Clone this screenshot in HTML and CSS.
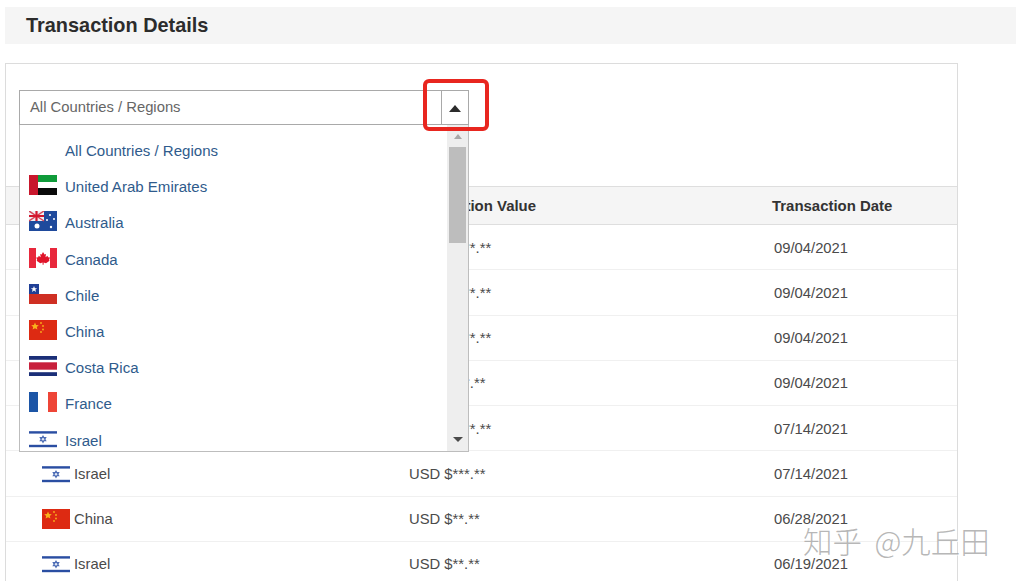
FILE: index.html
```html
<!DOCTYPE html>
<html lang="en">
<head>
<meta charset="utf-8">
<title>Transaction Details</title>
<link rel="stylesheet" href="styles.css">
</head>
<body>
<svg class="defs" width="0" height="0" aria-hidden="true">
  <symbol id="f-ae" viewBox="0 0 28 20">
    <rect width="28" height="7" fill="#0f9b3a"/><rect y="7" width="28" height="6" fill="#fff"/><rect y="13" width="28" height="7" fill="#0a0a0a"/><rect width="9" height="20" fill="#c8172c"/>
  </symbol>
  <symbol id="f-au" viewBox="0 0 28 20">
    <rect width="28" height="20" fill="#1f4a9c"/><rect width="15" height="10" fill="#eef0f5"/>
    <path d="M0 0l15 10M15 0L0 10" stroke="#d8485a" stroke-width="1.500"/><path d="M7.500 0v10M0 5h15" stroke="#d3172e" stroke-width="2.200"/>
    <circle cx="8" cy="15" r="2.500" fill="#fff"/><circle cx="21" cy="4" r="1" fill="#fff"/><circle cx="25" cy="8" r="1" fill="#fff"/><circle cx="18" cy="9" r="1" fill="#fff"/><circle cx="22" cy="16" r="1.200" fill="#fff"/>
  </symbol>
  <symbol id="f-ca" viewBox="0 0 28 20">
    <rect width="28" height="20" fill="#fff"/><rect width="7" height="20" fill="#e8283c"/><rect x="21" width="7" height="20" fill="#e8283c"/>
    <path d="M14 4l1.500 2.600 1.500-.6-.5 3.200 2-1.400.5 1.500 2 .2-1 2.500.6.800-3.600 2.400-2.400-.6V16.800h-1V14.600l-2.400.6L7.600 12.800l.6-.8-1-2.500 2-.2.500-1.500 2 1.400L11.200 6l1.500.6z" fill="#e0142a"/>
  </symbol>
  <symbol id="f-cl" viewBox="0 0 28 20">
    <rect width="28" height="20" fill="#fff"/><rect y="10" width="28" height="10" fill="#cf2f23"/><rect width="10" height="10" fill="#1f3f96"/>
    <path d="M5 2l.9 2.200H8.200L6.400 5.600l.6 2.300L5 6.600 3 7.900l.6-2.300L1.800 4.200h2.300z" fill="#fff"/>
  </symbol>
  <symbol id="f-cn" viewBox="0 0 28 20">
    <rect width="28" height="20" fill="#dd2a12"/>
    <path d="M6 2.500l1.100 2.500 2.700.2-2 1.800.6 2.600L6 8.200 3.600 9.600l.6-2.600-2-1.800 2.700-.2z" fill="#f9b21c"/>
    <circle cx="12" cy="3" r=".9" fill="#f9b21c"/><circle cx="14" cy="6" r=".9" fill="#f9b21c"/><circle cx="14" cy="9.500" r=".9" fill="#f9b21c"/><circle cx="12" cy="12" r=".9" fill="#f9b21c"/>
  </symbol>
  <symbol id="f-cr" viewBox="0 0 28 20">
    <rect width="28" height="20" fill="#fff"/><rect width="28" height="3.800" fill="#1b2f78"/><rect y="16.200" width="28" height="3.800" fill="#1b2f78"/><rect y="6.300" width="28" height="7.400" fill="#c8203c"/>
  </symbol>
  <symbol id="f-fr" viewBox="0 0 28 20">
    <rect width="28" height="20" fill="#fff"/><rect width="9" height="20" fill="#1c55a6"/><rect x="19" width="9" height="20" fill="#ee4537"/>
  </symbol>
  <symbol id="f-il" viewBox="0 0 28 20">
    <rect width="28" height="20" fill="#fff"/><rect y="2.200" width="28" height="2.400" fill="#2a4ea2"/><rect y="15.800" width="28" height="2.400" fill="#2a4ea2"/>
    <path d="M14 6l3.700 6.300h-7.400zM14 14.400l-3.700-6.300h7.400z" fill="#4d6db5"/><circle cx="14" cy="10.200" r="1.200" fill="#dfe6f3"/>
  </symbol>
</svg>

<div class="page">
  <h1 class="title-bar">Transaction Details</h1>

  <section class="panel">
    <div class="select">
      <div class="select-box">
        <span class="select-value">All Countries / Regions</span>
        <span class="select-toggle"><span class="caret-up"></span></span>
      </div>

      <div class="menu">
        <ul class="menu-list">
          <li class="menu-item"><span class="flag"></span>All Countries / Regions</li>
          <li class="menu-item"><svg class="flag"><use href="#f-ae"/></svg>United Arab Emirates</li>
          <li class="menu-item"><svg class="flag"><use href="#f-au"/></svg>Australia</li>
          <li class="menu-item"><svg class="flag"><use href="#f-ca"/></svg>Canada</li>
          <li class="menu-item"><svg class="flag"><use href="#f-cl"/></svg>Chile</li>
          <li class="menu-item"><svg class="flag"><use href="#f-cn"/></svg>China</li>
          <li class="menu-item"><svg class="flag"><use href="#f-cr"/></svg>Costa Rica</li>
          <li class="menu-item"><svg class="flag"><use href="#f-fr"/></svg>France</li>
          <li class="menu-item"><svg class="flag"><use href="#f-il"/></svg>Israel</li>
        </ul>
        <div class="scrollbar">
          <span class="arrow-up"></span>
          <span class="thumb"></span>
          <span class="arrow-down"></span>
        </div>
      </div>

      <div class="highlight"></div>
    </div>

    <div class="table">
      <div class="row head">
        <div class="cell"></div>
        <div class="cell">Transaction Value</div>
        <div class="cell date-head">Transaction Date</div>
      </div>
      <div class="row"><div class="cell"></div><div class="cell">USD $****.**</div><div class="cell">09/04/2021</div></div>
      <div class="row"><div class="cell"></div><div class="cell">USD $****.**</div><div class="cell">09/04/2021</div></div>
      <div class="row"><div class="cell"></div><div class="cell">USD $****.**</div><div class="cell">09/04/2021</div></div>
      <div class="row"><div class="cell"></div><div class="cell">USD $***.**</div><div class="cell">09/04/2021</div></div>
      <div class="row"><div class="cell"></div><div class="cell">USD $****.**</div><div class="cell">07/14/2021</div></div>
      <div class="row"><div class="cell country"><svg class="flag"><use href="#f-il"/></svg>Israel</div><div class="cell">USD $***.**</div><div class="cell">07/14/2021</div></div>
      <div class="row"><div class="cell country"><svg class="flag"><use href="#f-cn"/></svg>China</div><div class="cell">USD $**.**</div><div class="cell">06/28/2021</div></div>
      <div class="row"><div class="cell country"><svg class="flag"><use href="#f-il"/></svg>Israel</div><div class="cell">USD $**.**</div><div class="cell">06/19/2021</div></div>
    </div>
  </section>

  <div class="watermark">知乎 @九丘田</div>
</div>
</body>
</html>
```

FILE: styles.css
```css
* { box-sizing: border-box; }

html, body {
  margin: 0;
  height: 100%;
  background: #fff;
}

body {
  font-family: "Liberation Sans", Arial, sans-serif;
  font-size: 14.8px;
  color: #4a4a4a;
}

.defs { display: block; height: 0; }

.page {
  position: relative;
  height: 100vh;
  overflow: hidden;
  padding: 7px 0 0 5px;
}

.title-bar {
  margin: 0 0 19px;
  height: 37px;
  padding: 0 0 0 21px;
  background: #f5f5f5;
  color: #2c2c2c;
  font-size: 19.9px;
  font-weight: bold;
  line-height: 36px;
}

.panel {
  width: 953px;
  height: 700px;
  border: 1px solid #dcdcdc;
  padding-top: 26px;
}

/* Select */
.select {
  position: relative;
  width: 450px;
  margin: 0 0 61px 13px;
}

.select-box {
  display: flex;
  height: 35px;
  border: 1px solid #a9a9a9;
  background: #fff;
}

.select-value {
  flex: 1;
  padding-left: 10px;
  line-height: 32px;
  color: #666;
}

.select-toggle {
  display: flex;
  align-items: center;
  justify-content: center;
  width: 27px;
  border-left: 1px solid #a9a9a9;
}

.caret-up {
  width: 0;
  height: 0;
  border-left: 6px solid transparent;
  border-right: 6px solid transparent;
  border-bottom: 7px solid #2b2b2b;
  margin-top: 2px;
}

.menu {
  position: absolute;
  z-index: 2;
  top: 35px;
  left: 0;
  width: 450px;
  height: 327px;
  overflow: hidden;
  display: flex;
  background: #fff;
  border: 1px solid #bdbdbd;
  border-top: 0;
}

.menu-list {
  flex: 1;
  margin: 0;
  padding: 7.5px 0 0 9px;
  list-style: none;
}

.menu-item {
  display: flex;
  align-items: center;
  gap: 8px;
  height: 36.2px;
  font-size: 15.05px;
  color: #2f5b8c;
}

.menu-item .flag { margin-bottom: 3px; }

.flag {
  display: block;
  flex: none;
  width: 28px;
  height: 20px;
}

.scrollbar {
  flex: none;
  display: flex;
  flex-direction: column;
  align-items: center;
  width: 21px;
  background: #eeeeee;
}

.arrow-up {
  margin-top: 9px;
  width: 0;
  height: 0;
  border-left: 4.500px solid transparent;
  border-right: 4.500px solid transparent;
  border-bottom: 5px solid #a8a8a8;
}

.thumb {
  width: 17px;
  height: 96px;
  margin-top: 8px;
  background: #bdbdbd;
}

.arrow-down {
  margin-top: 194px;
  width: 0;
  height: 0;
  border-left: 5px solid transparent;
  border-right: 5px solid transparent;
  border-top: 5px solid #4a4a4a;
}

.highlight {
  position: absolute;
  z-index: 3;
  top: -11px;
  left: 404px;
  width: 66px;
  height: 52px;
  border: 4px solid #e8261f;
  border-radius: 6px;
}

/* Table */
.table { width: 951px; }

.row {
  display: grid;
  grid-template-columns: 403px 365px 1fr;
  align-items: center;
  height: 45.25px;
  padding-top: 1px;
  border-bottom: 1px solid #f0f0f0;
}

.row.head {
  height: 39px;
  padding-top: 0;
  background: #f5f5f5;
  border-top: 1px solid #dedede;
  border-bottom: 1px solid #dedede;
  color: #333;
  font-size: 14.95px;
  font-weight: bold;
}

.date-head { margin-left: -2px; }

.country {
  display: flex;
  align-items: center;
  gap: 4px;
  padding-left: 36px;
}

.watermark {
  position: absolute;
  z-index: 4;
  left: 803px;
  top: 519px;
  font-family: "Noto Sans CJK SC", sans-serif;
  font-size: 29.5px;
  font-weight: 300;
  word-spacing: 6px;
  line-height: 42px;
  white-space: nowrap;
  color: rgba(160, 160, 160, 0.75);
  text-shadow: 1px 1px 0 rgba(255, 255, 255, 0.8);
}
```
